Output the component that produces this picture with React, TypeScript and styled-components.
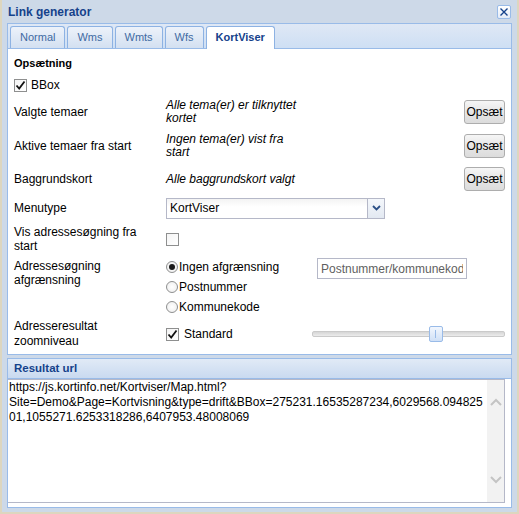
import React from 'react';
import styled, { createGlobalStyle } from 'styled-components';

// global
const GlobalStyle = createGlobalStyle`
    html, body {
        margin: 0;
        padding: 0;
    }

    body {
        background: #ddd6bf;
        font-family: "Liberation Sans", Arial, sans-serif;
        font-size: 12px;
        color: #000;
    }
`;

// local components
const Page = styled.div`
    width: 519px;
    height: 514px;
    padding-left: 2px;
    box-sizing: border-box;
    overflow: hidden;
`;

const Window = styled.div`
    width: 515px;
    height: 512px;
    box-sizing: border-box;
    background: #cdd9e8;
    padding: 0 5px 4px;
    display: flex;
    flex-direction: column;
`;

const Header = styled.div`
    height: 23px;
    display: flex;
    align-items: center;
    justify-content: space-between;
`;

const Title = styled.span`
    font-size: 12px;
    font-weight: bold;
    color: #15428b;
    padding-left: 1px;
`;

const CloseButton = styled.div`
    width: 14px;
    height: 14px;
    box-sizing: border-box;
    margin-right: 1px;
    border: 1px solid #99bbe8;
    border-radius: 2px;
    background: linear-gradient(#ffffff, #e3ebf7);
    display: flex;
    align-items: center;
    justify-content: center;
`;

const TabStrip = styled.div`
    height: 26px;
    box-sizing: border-box;
    border: 1px solid #99bbe8;
    background: linear-gradient(#dfe8f5, #cedff4);
    display: flex;
    align-items: flex-end;
    gap: 2px;
    padding-left: 2px;
`;

const Tab = styled.div<{ $active?: boolean }>`
    height: ${(p) => (p.$active ? 23 : 22)}px;
    margin-bottom: ${(p) => (p.$active ? -1 : 0)}px;
    box-sizing: border-box;
    padding: 0 9px;
    border: 1px solid #8db2e3;
    border-bottom: none;
    border-radius: 3px 3px 0 0;
    background: ${(p) => (p.$active ? '#ffffff' : 'linear-gradient(#edf2fa, #d3e0f1)')};
    color: ${(p) => (p.$active ? '#15428b' : '#416aa3')};
    font-size: 11px;
    font-weight: ${(p) => (p.$active ? 'bold' : 'normal')};
    line-height: 21px;
    position: relative;
`;

const TabBody = styled.div`
    height: 306px;
    box-sizing: border-box;
    border: 1px solid #99bbe8;
    border-top: none;
    background: #ffffff;
    padding: 7px 6px 0;
`;

const SectionTitle = styled.div`
    font-size: 11px;
    font-weight: bold;
    line-height: 14px;
`;

const CheckLabel = styled.label<{ $width?: number; $gap?: number }>`
    display: flex;
    align-items: center;
    gap: ${(p) => p.$gap ?? 4}px;
    height: 18px;
    width: ${(p) => (p.$width ? `${p.$width}px` : 'auto')};
    flex-shrink: 0;
    line-height: 14px;
`;

const TopCheck = styled(CheckLabel)`
    margin-top: 6px;
`;

const Box = styled.span`
    width: 13px;
    height: 13px;
    box-sizing: border-box;
    border: 1px solid #8e8f8f;
    background: linear-gradient(135deg, #f4f4f4, #ffffff);
    display: flex;
    align-items: center;
    justify-content: center;
`;

const Row = styled.div<{ $h: number; $top?: boolean }>`
    height: ${(p) => p.$h}px;
    display: grid;
    grid-template-columns: 152px 1fr;
    align-items: ${(p) => (p.$top ? 'start' : 'center')};
`;

const Label = styled.div<{ $lh?: number; $pt?: number }>`
    line-height: ${(p) => p.$lh ?? 14}px;
    padding-top: ${(p) => p.$pt ?? 0}px;
`;

const Value = styled.div<{ $top?: boolean }>`
    display: flex;
    align-items: ${(p) => (p.$top ? 'flex-start' : 'center')};
    height: 100%;
`;

const Info = styled.div`
    font-style: italic;
    line-height: 13px;
`;

const SetupButton = styled.button`
    margin-left: auto;
    width: 41px;
    height: 24px;
    box-sizing: border-box;
    padding: 0;
    border: 1px solid #adadad;
    border-radius: 3px;
    background: linear-gradient(#f6f6f6, #e6e6e6 50%, #dcdcdc);
    font-family: "Liberation Sans", Arial, sans-serif;
    font-size: 12px;
    color: #000;
`;

const Select = styled.div`
    width: 219px;
    height: 21px;
    box-sizing: border-box;
    border: 1px solid #b5b8c8;
    display: flex;
`;

const SelectText = styled.div`
    flex: 1;
    padding-left: 3px;
    line-height: 19px;
    background: linear-gradient(#f3f3f3, #ffffff 40%);
`;

const SelectArrow = styled.div`
    width: 16px;
    border-left: 1px solid #b5b8c8;
    background: linear-gradient(#f4f7fb, #e3e9f2);
    display: flex;
    align-items: center;
    justify-content: center;
`;

const RadioGroup = styled.div`
    width: 151px;
    flex-shrink: 0;
    display: flex;
    flex-direction: column;
`;

const RadioOption = styled.label`
    height: 20px;
    display: flex;
    align-items: center;
    gap: 1px;
`;

const RadioCircle = styled.span<{ $checked?: boolean }>`
    width: 12px;
    height: 12px;
    box-sizing: border-box;
    border: 1px solid #8e8f8f;
    border-radius: 50%;
    background: radial-gradient(circle, #ffffff, #ececec);
    display: flex;
    align-items: center;
    justify-content: center;

    &::after {
        content: '';
        display: ${(p) => (p.$checked ? 'block' : 'none')};
        width: 6px;
        height: 6px;
        border-radius: 50%;
        background: #1b1b1b;
    }
`;

const TextInput = styled.input`
    width: 150px;
    height: 21px;
    margin-top: 1px;
    box-sizing: border-box;
    border: 1px solid #b5b8c8;
    padding: 0 3px;
    font-family: "Liberation Sans", Arial, sans-serif;
    font-size: 12px;
    outline: none;

    &::placeholder {
        color: #5f5f5f;
    }
`;

const Slider = styled.div`
    flex: 1;
    height: 16px;
    position: relative;
`;

const SliderTrack = styled.div`
    position: absolute;
    left: 0;
    right: 0;
    top: 5px;
    height: 6px;
    box-sizing: border-box;
    border: 1px solid #cacaca;
    border-radius: 2px;
    background: linear-gradient(#d6d6d6, #ececec);
`;

const SliderThumb = styled.div`
    position: absolute;
    top: 0;
    width: 14px;
    height: 16px;
    box-sizing: border-box;
    border: 1px solid #99bbe8;
    border-radius: 2px;
    background: linear-gradient(#f2f7fe, #cfe0f6);

    &::after {
        content: '';
        position: absolute;
        left: 5px;
        top: 3px;
        width: 1px;
        height: 8px;
        background: #99bbe8;
    }
`;

const ResultPanel = styled.div`
    margin-top: 3px;
    flex: 1;
    border: 1px solid #99bbe8;
    display: flex;
    flex-direction: column;
`;

const ResultHeader = styled.div`
    height: 20px;
    box-sizing: border-box;
    border-bottom: 1px solid #99bbe8;
    background: linear-gradient(#e1eaf6, #c9daf0);
    padding-left: 6px;
    font-size: 11.5px;
    font-weight: bold;
    line-height: 19px;
    color: #15428b;
`;

const ResultBody = styled.div`
    flex: 1;
    background: #ffffff;
    padding: 0 6px 4px 0;
    display: flex;
`;

const ResultBox = styled.div`
    flex: 1;
    border: 1px solid #b5b8c8;
    border-left: none;
    display: flex;
`;

const ResultText = styled.div`
    flex: 1;
    padding-left: 1px;
    line-height: 15px;
    white-space: nowrap;
    overflow: hidden;
`;

const ScrollTrack = styled.div`
    width: 17px;
    background: #f2f2f2;
    display: flex;
    flex-direction: column;
    justify-content: space-between;
    align-items: center;
    padding: 18px 0 18px;
`;

// icons
const CheckMark = () => (
    <svg width='11' height='11' viewBox='0 0 11 11'>
        <path d='M1.5 5.5 L4.2 8.5 L9.5 1.5' fill='none' stroke='#111' strokeWidth='1.8' />
    </svg>
);

const Chevron = ({ up, color }: { up?: boolean; color: string }) => (
    <svg width='12' height='8' viewBox='0 0 12 8'>
        <path
            d={up ? 'M1 7 L6 2 L11 7' : 'M1 1 L6 6 L11 1'}
            fill='none'
            stroke={color}
            strokeWidth='2'
        />
    </svg>
);

const tabs = ['Normal', 'Wms', 'Wmts', 'Wfs', 'KortViser'];

const urlLines = [
    'https://js.kortinfo.net/Kortviser/Map.html?',
    'Site=Demo&Page=Kortvisning&type=drift&BBox=275231.16535287234,6029568.094825',
    '01,1055271.6253318286,6407953.48008069'
];

// export
export default () => {
    return (
        <Page>
            <GlobalStyle />
            <Window>
                <Header>
                    <Title>Link generator</Title>
                    <CloseButton>
                        <svg width='10' height='10' viewBox='0 0 10 10'>
                            <path d='M1.5 1.5 L8.5 8.5 M8.5 1.5 L1.5 8.5' stroke='#15428b' strokeWidth='1.4' />
                        </svg>
                    </CloseButton>
                </Header>
                <TabStrip>
                    {tabs.map((t) => (
                        <Tab key={t} $active={t === 'KortViser'}>
                            {t}
                        </Tab>
                    ))}
                </TabStrip>
                <TabBody>
                    <SectionTitle>Opsætning</SectionTitle>
                    <TopCheck>
                        <Box>
                            <CheckMark />
                        </Box>
                        BBox
                    </TopCheck>
                    <Row $h={35}>
                        <Label>Valgte temaer</Label>
                        <Value>
                            <Info>
                                Alle tema(er) er tilknyttet
                                <br />
                                kortet
                            </Info>
                            <SetupButton>Opsæt</SetupButton>
                        </Value>
                    </Row>
                    <Row $h={34}>
                        <Label>Aktive temaer fra start</Label>
                        <Value>
                            <Info>
                                Ingen tema(er) vist fra
                                <br />
                                start
                            </Info>
                            <SetupButton>Opsæt</SetupButton>
                        </Value>
                    </Row>
                    <Row $h={32}>
                        <Label>Baggrundskort</Label>
                        <Value>
                            <Info>Alle baggrundskort valgt</Info>
                            <SetupButton>Opsæt</SetupButton>
                        </Value>
                    </Row>
                    <Row $h={26}>
                        <Label>Menutype</Label>
                        <Value>
                            <Select>
                                <SelectText>KortViser</SelectText>
                                <SelectArrow>
                                    <svg width='9' height='6' viewBox='0 0 9 6'>
                                        <path d='M1 1 L4.5 4.5 L8 1' fill='none' stroke='#2b4f86' strokeWidth='1.8' />
                                    </svg>
                                </SelectArrow>
                            </Select>
                        </Value>
                    </Row>
                    <Row $h={36}>
                        <Label>
                            Vis adressesøgning fra
                            <br />
                            start
                        </Label>
                        <Value>
                            <Box />
                        </Value>
                    </Row>
                    <Row $h={61} $top>
                        <Label $pt={2}>
                            Adressesøgning
                            <br />
                            afgrænsning
                        </Label>
                        <Value $top>
                            <RadioGroup>
                                <RadioOption>
                                    <RadioCircle $checked />
                                    Ingen afgrænsning
                                </RadioOption>
                                <RadioOption>
                                    <RadioCircle />
                                    Postnummer
                                </RadioOption>
                                <RadioOption>
                                    <RadioCircle />
                                    Kommunekode
                                </RadioOption>
                            </RadioGroup>
                            <TextInput placeholder='Postnummer/kommunekode' readOnly />
                        </Value>
                    </Row>
                    <Row $h={32}>
                        <Label $lh={15}>
                            Adresseresultat
                            <br />
                            zoomniveau
                        </Label>
                        <Value>
                            <CheckLabel $width={146} $gap={5}>
                                <Box>
                                    <CheckMark />
                                </Box>
                                Standard
                            </CheckLabel>
                            <Slider>
                                <SliderTrack />
                                <SliderThumb style={{ left: 117 }} />
                            </Slider>
                        </Value>
                    </Row>
                </TabBody>
                <ResultPanel>
                    <ResultHeader>Resultat url</ResultHeader>
                    <ResultBody>
                        <ResultBox>
                            <ResultText>
                                {urlLines.map((l) => (
                                    <div key={l}>{l}</div>
                                ))}
                            </ResultText>
                            <ScrollTrack>
                                <Chevron up color='#c4c4c4' />
                                <Chevron color='#c4c4c4' />
                            </ScrollTrack>
                        </ResultBox>
                    </ResultBody>
                </ResultPanel>
            </Window>
        </Page>
    );
};
